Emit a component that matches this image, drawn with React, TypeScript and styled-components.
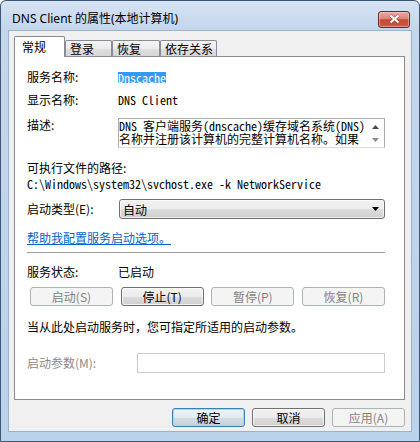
import React from "react";
import styled, { createGlobalStyle, css } from "styled-components";

const UI = `"Noto Sans", "Noto Sans CJK SC", sans-serif`;
const CJK = `"Noto Sans CJK SC", "Noto Sans", sans-serif`;
const MONO = `"Noto Sans Mono CJK SC", "Liberation Mono", "Noto Sans CJK SC", monospace`;

const GlobalStyle = createGlobalStyle`
  html, body { margin: 0; padding: 0; background: #ffffff; }
  body { font-family: ${CJK}; font-size: 12px; color: #000; }
  *, *::before, *::after { box-sizing: border-box; }
`;

const Window = styled.div`
  width: 420px;
  height: 442px;
  border: 1px solid #3d5874;
  border-radius: 6px 6px 0 0;
  background: linear-gradient(to bottom, #d6e3f3 0px, #c3d6ec 29px, #bcd1ea 100%);
  display: flex;
  flex-direction: column;
  padding: 0 7px 9px 7px;
  overflow: hidden;
`;

const TitleBar = styled.div`
  height: 29px;
  flex: none;
  display: flex;
  align-items: center;
  justify-content: space-between;
  padding: 7px 2px 0 4px;
`;

const Title = styled.span`
  font-family: ${UI};
  font-size: 12px;
  line-height: 16px;
  color: #000;
`;

const CloseButton = styled.div`
  width: 32px;
  height: 17px;
  border: 1px solid #6b2a22;
  border-radius: 3px;
  background: linear-gradient(to bottom, #e9aa9e 0%, #d98573 45%, #c54a33 52%, #cc5a40 100%);
  box-shadow: inset 0 0 0 1px rgba(255, 220, 210, 0.45);
  display: flex;
  align-items: center;
  justify-content: center;
`;

const Client = styled.div`
  flex: 1;
  background: #f0f0f0;
  border: 1px solid #9cb1ca;
  padding: 5px 6px 4px 5px;
  display: flex;
  flex-direction: column;
`;

const TabStrip = styled.div`
  height: 21px;
  flex: none;
  display: flex;
  align-items: flex-end;
  margin-bottom: -1px;
  position: relative;
  z-index: 2;
`;

const Tab = styled.div<{ $active?: boolean; $w: number }>`
  width: ${(p) => p.$w}px;
  border: 1px solid #898c95;
  border-bottom: none;
  border-radius: 2px 2px 0 0;
  font-family: ${CJK};
  font-size: 12px;
  ${(p) =>
    p.$active
      ? css`
          height: 21px;
          line-height: 19px;
          padding-left: 7px;
          background: #ffffff;
        `
      : css`
          height: 16px;
          line-height: 15px;
          margin-bottom: 1px;
          padding-left: 4px;
          background: linear-gradient(to bottom, #f4f4f4 0%, #ececec 50%, #e0e0e0 51%, #d6d6d6 100%);
        `}
`;

const Panel = styled.div`
  height: 344px;
  flex: none;
  background: #ffffff;
  border: 1px solid #898c95;
  padding: 10px 19px 0 12px;
  display: flex;
  flex-direction: column;
`;

const Row = styled.div<{ $mt: number; $h: number; $top?: boolean }>`
  margin-top: ${(p) => p.$mt}px;
  height: ${(p) => p.$h}px;
  flex: none;
  display: flex;
  align-items: ${(p) => (p.$top ? "flex-start" : "center")};
`;

const Label = styled.span<{ $w?: number; $muted?: boolean }>`
  width: ${(p) => (p.$w ? `${p.$w}px` : "auto")};
  flex: none;
  font-family: ${CJK};
  font-size: 12px;
  line-height: 14px;
  color: ${(p) => (p.$muted ? "#8a8a8a" : "#000")};
`;

const MonoText = styled.span`
  font-family: ${MONO};
  font-size: 12px;
  line-height: 12px;
  white-space: pre;
`;

const Selected = styled(MonoText)`
  background: #3399ff;
  color: #ffffff;
  padding: 0;
  line-height: 11px;
`;

const DescBox = styled.div`
  width: 268px;
  height: 30px;
  border: 1px solid #abadb3;
  border-bottom-color: #dadde3;
  background: #ffffff;
  display: flex;
`;

const DescText = styled.div`
  flex: 1;
  padding: 0;
  font-family: ${MONO};
  font-size: 12px;
  line-height: 13px;
  white-space: pre;
`;

const ScrollBar = styled.div`
  width: 17px;
  flex: none;
  display: flex;
  flex-direction: column;
  justify-content: space-between;
  align-items: center;
  padding: 6px 0 5px 0;
  background: #ffffff;
`;

const Combo = styled.div`
  width: 267px;
  height: 20px;
  border: 1px solid #707070;
  border-radius: 3px;
  background: linear-gradient(to bottom, #f2f2f2 0%, #ebebeb 50%, #dddddd 51%, #cfcfcf 100%);
  box-shadow: inset 0 0 0 1px rgba(255, 255, 255, 0.6);
  display: flex;
  align-items: center;
  justify-content: space-between;
  padding: 0 5px 0 3px;
  font-family: ${CJK};
  font-size: 12px;
`;

const Link = styled.a`
  font-family: ${CJK};
  font-size: 12px;
  line-height: 16px;
  color: #0066cc;
  text-decoration: underline;
  cursor: pointer;
`;

const Separator = styled.div`
  margin-top: 6px;
  height: 1px;
  flex: none;
  background: #a0a0a0;
`;

const ButtonRow = styled.div<{ $mt: number }>`
  margin-top: ${(p) => p.$mt}px;
  flex: none;
  display: flex;
  justify-content: space-between;
  padding-left: 3px;
`;

const Footer = styled.div`
  margin-top: 8px;
  flex: none;
  display: flex;
  justify-content: flex-end;
  gap: 7px;
`;

const Button = styled.button<{ $variant?: "normal" | "default" | "disabled"; $w: number }>`
  width: ${(p) => p.$w}px;
  height: 19px;
  padding: 0;
  border-radius: 3px;
  font-family: ${CJK};
  font-size: 12px;
  line-height: 16px;
  ${(p) =>
    p.$variant === "disabled"
      ? css`
          border: 1px solid #adb2b5;
          background: #f4f4f4;
          color: #838383;
        `
      : p.$variant === "default"
      ? css`
          border: 1px solid #3c7fb1;
          background: linear-gradient(to bottom, #eef4f8 0%, #e3ebf0 50%, #d3dde4 51%, #c6d2da 100%);
          box-shadow: inset 0 0 0 1px #a6d8f3;
          color: #000;
        `
      : css`
          border: 1px solid #707070;
          background: linear-gradient(to bottom, #f2f2f2 0%, #ebebeb 50%, #dddddd 51%, #cfcfcf 100%);
          box-shadow: inset 0 0 0 1px rgba(255, 255, 255, 0.7);
          color: #000;
        `}
`;

const ParamInput = styled.div`
  width: 248px;
  height: 20px;
  border: 1px solid #c9cdd2;
  background: #ffffff;
`;

const Arrow = ({ up, color }: { up?: boolean; color: string }) => (
  <svg width="7" height="4" viewBox="0 0 7 4">
    <path d={up ? "M0 4 L3.5 0 L7 4 Z" : "M0 0 L7 0 L3.5 4 Z"} fill={color} />
  </svg>
);

export default function App() {
  return (
    <>
      <GlobalStyle />
      <Window>
        <TitleBar>
          <Title>DNS Client 的属性(本地计算机)</Title>
          <CloseButton>
            <svg width="13" height="10" viewBox="0 0 13 10">
              <path d="M2.5 1.5 L10.5 8.5 M10.5 1.5 L2.5 8.5" stroke="#7a2a1e" strokeWidth="3.6" strokeOpacity="0.55" />
              <path d="M2.5 1.5 L10.5 8.5 M10.5 1.5 L2.5 8.5" stroke="#ffffff" strokeWidth="2.2" />
            </svg>
          </CloseButton>
        </TitleBar>
        <Client>
          <TabStrip>
            <Tab $active $w={51}>常规</Tab>
            <Tab $w={47}>登录</Tab>
            <Tab $w={48}>恢复</Tab>
            <Tab $w={57}>依存关系</Tab>
          </TabStrip>
          <Panel>
            <Row $mt={0} $h={20}>
              <Label $w={91}>服务名称:</Label>
              <Selected>Dnscache</Selected>
            </Row>
            <Row $mt={3} $h={20}>
              <Label $w={91}>显示名称:</Label>
              <MonoText>DNS Client</MonoText>
            </Row>
            <Row $mt={8} $h={30} $top>
              <Label $w={91}>描述:</Label>
              <DescBox>
                <DescText>
                  {"DNS 客户端服务(dnscache)缓存域名系统(DNS)\n名称并注册该计算机的完整计算机名称。如果"}
                </DescText>
                <ScrollBar>
                  <Arrow up color="#4a4a4a" />
                  <Arrow color="#8c8c8c" />
                </ScrollBar>
              </DescBox>
            </Row>
            <Row $mt={12} $h={16}>
              <Label>可执行文件的路径:</Label>
            </Row>
            <Row $mt={0} $h={16}>
              <MonoText>C:\Windows\system32\svchost.exe -k NetworkService</MonoText>
            </Row>
            <Row $mt={7} $h={20}>
              <Label $w={92}>启动类型(E):</Label>
              <Combo>
                <span>自动</span>
                <Arrow color="#000000" />
              </Combo>
            </Row>
            <Row $mt={11} $h={16}>
              <Link>帮助我配置服务启动选项。</Link>
            </Row>
            <Separator />
            <Row $mt={11} $h={16}>
              <Label $w={91}>服务状态:</Label>
              <Label>已启动</Label>
            </Row>
            <ButtonRow $mt={7}>
              <Button $w={83} $variant="disabled">启动(S)</Button>
              <Button $w={83}>停止(T)</Button>
              <Button $w={83} $variant="disabled">暂停(P)</Button>
              <Button $w={83} $variant="disabled">恢复(R)</Button>
            </ButtonRow>
            <Row $mt={13} $h={16}>
              <Label>当从此处启动服务时，您可指定所适用的启动参数。</Label>
            </Row>
            <Row $mt={18} $h={20}>
              <Label $w={110} $muted>启动参数(M):</Label>
              <ParamInput />
            </Row>
          </Panel>
          <Footer>
            <Button $w={73} $variant="default">确定</Button>
            <Button $w={73}>取消</Button>
            <Button $w={73} $variant="disabled">应用(A)</Button>
          </Footer>
        </Client>
      </Window>
    </>
  );
}
